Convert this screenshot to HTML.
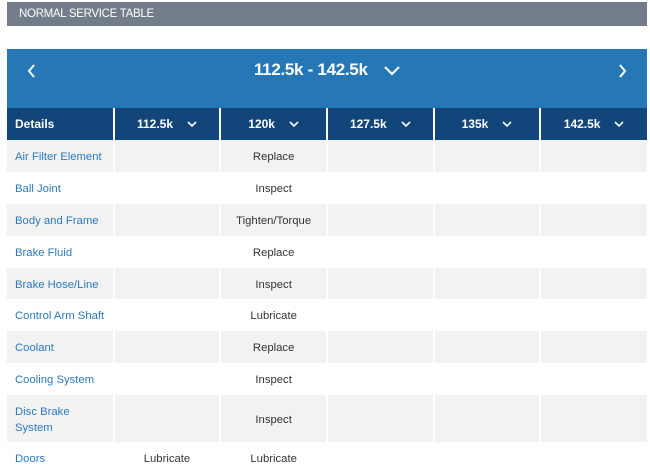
<!DOCTYPE html>
<html><head><style>
body{margin:0;width:650px;height:467px;overflow:hidden;background:#fff;font-family:"Liberation Sans",sans-serif;}
.bar{position:absolute;left:7px;top:2px;width:640px;height:24px;background:#737d8a;color:#fff;font-size:11.5px;line-height:24px;padding-left:12px;box-sizing:border-box;letter-spacing:-0.3px}
.hd{position:absolute;left:7px;top:49px;width:640px;height:59px;background:#2577b6;color:#fff}
.hd .t{position:absolute;left:0;right:0;top:11px;text-align:center;font-size:17px;font-weight:bold;letter-spacing:-0.3px}
table{position:absolute;left:7px;top:108px;border-collapse:collapse;width:640px;table-layout:fixed;font-size:11.3px}
th{background:#124579;color:#fff;height:32px;font-size:12px;border-left:2px solid #fff;padding:0;text-align:center}
th:first-child{border-left:none;text-align:left;padding-left:8px}
td{height:29.9px;padding:2px 0 0;text-align:center;color:#333;border-left:2px solid #fff}
td:first-child{text-align:left;padding-left:8px;color:#2a7bbd;border-left:none}
tr.g td{background:#f2f2f2}
.c{display:inline-block;margin-left:14px;vertical-align:middle}
</style></head><body>
<div class="bar">NORMAL SERVICE TABLE</div>
<div class="hd">
<svg style="position:absolute;left:20px;top:15px" width="10" height="14"><path d="M7 1 L2 7 L7 13" stroke="#fff" stroke-width="2" fill="none"/></svg>
<div class="t">112.5k - 142.5k <svg style="margin-left:12px;vertical-align:middle" width="16" height="10"><path d="M1 1 L8 8 L15 1" stroke="#fff" stroke-width="2.2" fill="none"/></svg></div>
<svg style="position:absolute;right:20px;top:15px" width="10" height="14"><path d="M3 1 L8 7 L3 13" stroke="#fff" stroke-width="2" fill="none"/></svg>
</div>
<table>
<tr><th>Details</th>
<th>112.5k<svg class="c" width="10" height="7"><path d="M1 1 L5 5 L9 1" stroke="#fff" stroke-width="1.6" fill="none"/></svg></th>
<th>120k<svg class="c" width="10" height="7"><path d="M1 1 L5 5 L9 1" stroke="#fff" stroke-width="1.6" fill="none"/></svg></th>
<th>127.5k<svg class="c" width="10" height="7"><path d="M1 1 L5 5 L9 1" stroke="#fff" stroke-width="1.6" fill="none"/></svg></th>
<th>135k<svg class="c" width="10" height="7"><path d="M1 1 L5 5 L9 1" stroke="#fff" stroke-width="1.6" fill="none"/></svg></th>
<th>142.5k<svg class="c" width="10" height="7"><path d="M1 1 L5 5 L9 1" stroke="#fff" stroke-width="1.6" fill="none"/></svg></th></tr>
<tr class="g"><td>Air Filter Element</td><td></td><td>Replace</td><td></td><td></td><td></td></tr>
<tr><td>Ball Joint</td><td></td><td>Inspect</td><td></td><td></td><td></td></tr>
<tr class="g"><td>Body and Frame</td><td></td><td>Tighten/Torque</td><td></td><td></td><td></td></tr>
<tr><td>Brake Fluid</td><td></td><td>Replace</td><td></td><td></td><td></td></tr>
<tr class="g"><td>Brake Hose/Line</td><td></td><td>Inspect</td><td></td><td></td><td></td></tr>
<tr><td>Control Arm Shaft</td><td></td><td>Lubricate</td><td></td><td></td><td></td></tr>
<tr class="g"><td>Coolant</td><td></td><td>Replace</td><td></td><td></td><td></td></tr>
<tr><td>Cooling System</td><td></td><td>Inspect</td><td></td><td></td><td></td></tr>
<tr class="g"><td style="height:45px;line-height:16px">Disc Brake<br>System</td><td></td><td>Inspect</td><td></td><td></td><td></td></tr>
<tr><td>Doors</td><td>Lubricate</td><td>Lubricate</td><td></td><td></td><td></td></tr>
</table>
</body></html>
